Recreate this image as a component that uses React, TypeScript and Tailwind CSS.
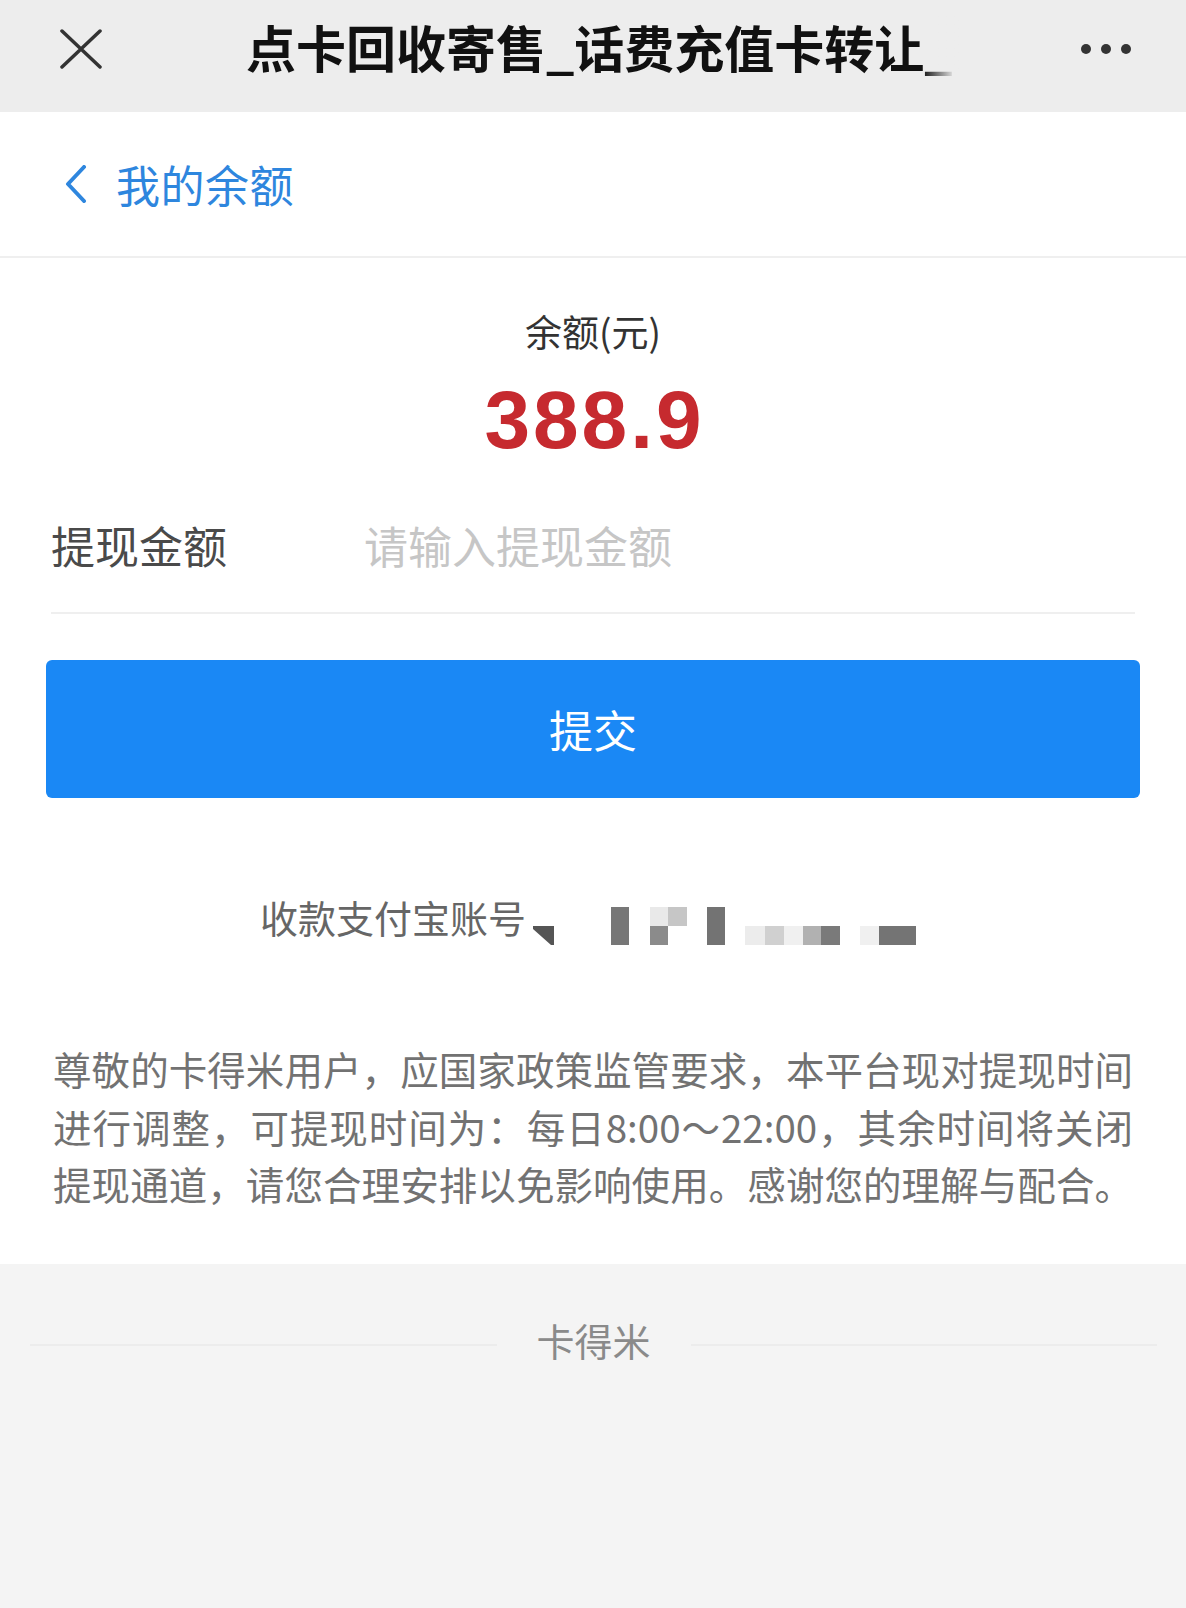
const lines = [
  '尊敬的卡得米用户，应国家政策监管要求，本平台现对提现时间',
  '进行调整，可提现时间为：每日8:00～22:00，其余时间将关闭',
  '提现通道，请您合理安排以免影响使用。感谢您的理解与配合。',
];

function Mosaic() {
  return (
    <svg width="383" height="38" viewBox="0 0 383 38" className="mt-[10px] ml-[7px] shrink-0">
      <polygon points="0,19 21,19 21,38 18,38 0,22" fill="#555" />
      <rect x="78" y="0" width="18" height="38" fill="#777" />
      <rect x="117" y="0" width="18" height="19" fill="#e9e9e9" />
      <rect x="135" y="0" width="19" height="19" fill="#c6c6c6" />
      <rect x="117" y="19" width="18" height="19" fill="#8b8b8b" />
      <rect x="174" y="0" width="18" height="38" fill="#737373" />
      <rect x="212" y="19" width="20" height="19" fill="#ececec" />
      <rect x="232" y="19" width="19" height="19" fill="#d0d0d0" />
      <rect x="251" y="19" width="19" height="19" fill="#f0f0f0" />
      <rect x="270" y="19" width="18" height="19" fill="#b1b1b1" />
      <rect x="288" y="19" width="19" height="19" fill="#7a7a7a" />
      <rect x="327" y="19" width="19" height="19" fill="#f0f0f0" />
      <rect x="346" y="19" width="37" height="19" fill="#747474" />
    </svg>
  );
}

export default function App() {
  return (
    <div className="flex min-h-[1608px] flex-col bg-[#f4f4f4] font-['Noto_Sans_CJK_SC','Noto_Sans',sans-serif]">
      {/* top bar */}
      <div className="flex h-[112px] items-center bg-[#ededed] pb-[14px] pl-[60px]">
        <svg width="42" height="40" viewBox="0 0 42 40" className="shrink-0">
          <path d="M2 2 L40 38 M40 2 L2 38" stroke="#333" strokeWidth="3.5" strokeLinecap="round" />
        </svg>
        <div className="relative ml-[144px] -mt-[6px] w-[716px] overflow-hidden whitespace-nowrap">
          <span className="text-[50px] leading-[60px] font-bold text-[#111]">
            点卡回收寄售_话费充值卡转让_卡得米
          </span>
          <div className="absolute inset-y-0 right-0 w-[44px] bg-linear-to-r from-transparent from-10% to-[#ededed] to-85%" />
        </div>
        <div className="ml-[119px] flex gap-[10px]">
          <span className="h-[10px] w-[10px] rounded-full bg-[#333]" />
          <span className="h-[10px] w-[10px] rounded-full bg-[#333]" />
          <span className="h-[10px] w-[10px] rounded-full bg-[#333]" />
        </div>
      </div>

      <div className="bg-white pb-[51px]">
        {/* nav */}
        <div className="flex h-[146px] items-center border-b-2 border-[#efefef] pl-[64px]">
          <svg width="24" height="38" viewBox="0 0 24 38" className="shrink-0">
            <path d="M20 2 L4 19 L20 36" fill="none" stroke="#2e86de" strokeWidth="4" strokeLinecap="round" strokeLinejoin="round" />
          </svg>
          <span className="ml-[28px] text-[44px] leading-[56px] tracking-[0.5px] text-[#2e86de]">我的余额</span>
        </div>

        {/* balance */}
        <div className="flex flex-col items-center">
          <div className="mt-[51px] text-[37px] leading-[44px] text-[#333]">余额(元)</div>
          <div className="mt-[26px] pl-[3px] font-['Liberation_Sans',Arial,sans-serif] text-[82px] leading-[82px] font-bold tracking-[3px] text-[#c62a2f]">
            388.9
          </div>
        </div>

        <div className="mx-[51px] mt-[17px] flex h-[136px] items-center border-b-2 border-[#efefef]">
          <span className="w-[313px] shrink-0 text-[44px] leading-[56px] text-[#4a4a4a]">提现金额</span>
          <input
            className="min-w-0 flex-1 bg-transparent text-[44px] leading-[56px] text-[#333] outline-none placeholder:text-[#c6c6c6]"
            placeholder="请输入提现金额"
          />
        </div>

        <div className="mt-[46px] px-[46px]">
          <button className="flex h-[138px] w-full items-center justify-center rounded-[6px] bg-[#1a88f5] text-[44px] leading-[56px] text-white">
            提交
          </button>
        </div>

        {/* account */}
        <div className="mt-[99px] flex h-[48px] items-start pl-[260px]">
          <span className="text-[38px] leading-[40px] text-[#666]">收款支付宝账号</span>
          <Mosaic />
        </div>

        <div className="mt-[95px] px-[53px] text-[38.5px] leading-[57.5px] text-[#727272]">
          {lines.map((l) => (
            <div key={l} className="text-justify whitespace-nowrap [text-align-last:justify]">
              {l}
            </div>
          ))}
        </div>
      </div>

      {/* footer */}
      <div className="mt-[56px] flex h-[40px] items-center pr-[29px] pl-[30px]">
        <div className="mt-[10px] h-[2px] flex-1 bg-[#ececec]" />
        <span className="mx-[40px] text-[38px] leading-[40px] text-[#8a8a8a]">卡得米</span>
        <div className="mt-[10px] h-[2px] flex-1 bg-[#ececec]" />
      </div>
    </div>
  );
}
